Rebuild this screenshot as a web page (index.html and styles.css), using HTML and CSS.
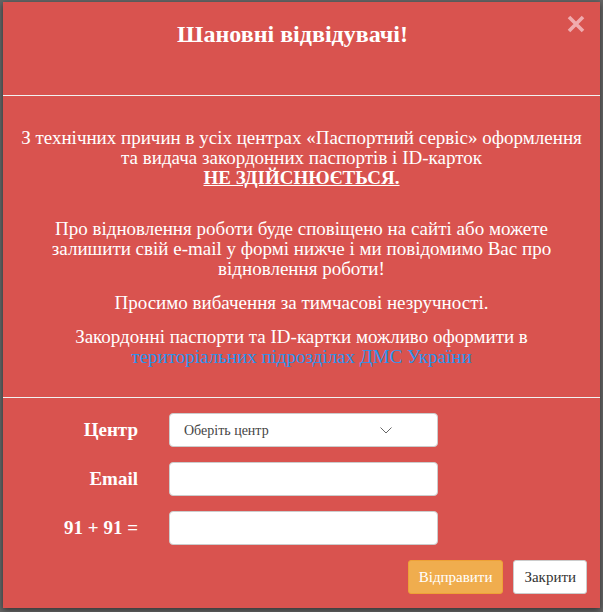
FILE: index.html
```html
<!DOCTYPE html>
<html lang="uk">
<head>
    <meta charset="UTF-8">
    <meta name="viewport" content="width=device-width, initial-scale=1.0">
    <title>Паспортний сервіс</title>
    <link rel="stylesheet" href="styles.css">
</head>
<body>

    <div class="modal">
        <div class="modal-header">
            <h4 class="modal-title">Шановні відвідувачі!</h4>
            <button class="close" type="button" aria-label="Закрити">
                <svg width="18" height="18" viewBox="0 0 18 18">
                    <path d="M2 2 L16 16 M16 2 L2 16" stroke="currentColor" stroke-width="3.6" fill="none"/>
                </svg>
            </button>
        </div>

        <div class="modal-body">
            <p class="first">З технічних причин в усіх центрах «Паспортний сервіс» оформлення та видача закордонних паспортів і ID-карток<br>
                <b><u>НЕ ЗДІЙСНЮЄТЬСЯ.</u></b></p>
            <p>Про відновлення роботи буде сповіщено на сайті або можете залишити свій e-mail у формі нижче і ми повідомимо Вас про відновлення роботи!</p>
            <p>Просимо вибачення за тимчасові незручності.</p>
            <p>Закордонні паспорти та ID-картки можливо оформити в<br>
                <a href="#">територіальних підрозділах ДМС України</a></p>
        </div>

        <form class="modal-footer">
            <div class="form-row">
                <label for="center">Центр</label>
                <div class="select-wrap">
                    <select id="center">
                        <option>Оберіть центр</option>
                    </select>
                    <svg class="chevron" width="12" height="7" viewBox="0 0 12 7">
                        <path d="M0.5 0.5 L6 6 L11.5 0.5" stroke="#666" stroke-width="1" fill="none"/>
                    </svg>
                </div>
            </div>
            <div class="form-row">
                <label for="email">Email</label>
                <input type="text" id="email">
            </div>
            <div class="form-row">
                <label for="captcha">91 + 91 =</label>
                <input type="text" id="captcha">
            </div>
            <div class="buttons">
                <button type="button" class="btn btn-warning">Відправити</button>
                <button type="button" class="btn btn-default">Закрити</button>
            </div>
        </form>
    </div>

</body>
</html>
```

FILE: styles.css
```css
body {
    margin: 0;
    padding: 2px 3px 4px;
    background-color: #656565;
    font-family: "Liberation Serif", "Times New Roman", serif;
}

.modal {
    width: 597px;
    background-color: #d9534f;
    color: white;
    box-shadow: 0 2px 6px rgba(0, 0, 0, 0.5);
}

.modal-header {
    display: flex;
    height: 94px;
    padding: 0 15px;
    box-sizing: border-box;
    border-bottom: 1px solid #f2f2f2;
}

.modal-title {
    flex: 1;
    margin: 18px 0 0;
    font-size: 24px;
    line-height: 28px;
    text-align: center;
}

.close {
    align-self: flex-start;
    margin-top: 13px;
    padding: 0;
    border: none;
    background: none;
    color: rgba(255, 230, 238, 0.6);
    cursor: pointer;
}

.close svg {
    display: block;
}

.modal-body {
    padding: 32px 15px 30px;
    border-bottom: 1px solid #f2f2f2;
    text-align: center;
    font-size: 19px;
    line-height: 20px;
}

.modal-body p {
    margin: 0 0 14px;
}

.modal-body p.first {
    margin-bottom: 31px;
}

.modal-body p:last-child {
    margin-bottom: 0;
}

.modal-body a {
    color: #2a93ee;
    text-decoration: none;
}

.modal-footer {
    padding: 15px 13px 14px 15px;
}

.form-row {
    display: flex;
    align-items: center;
    margin-bottom: 15px;
}

.form-row label {
    width: 120px;
    margin-right: 31px;
    text-align: right;
    font-size: 19px;
    line-height: 20px;
    font-weight: bold;
}

.form-row input,
.form-row select {
    width: 269px;
    height: 34px;
    box-sizing: border-box;
    border: 1px solid #ccc;
    border-radius: 4px;
    background-color: white;
    font-family: inherit;
    font-size: 14px;
}

.form-row select {
    appearance: none;
    padding: 0 14px;
    color: #444;
}

.select-wrap {
    position: relative;
}

.chevron {
    position: absolute;
    right: 46px;
    top: 14px;
}

.buttons {
    display: flex;
    justify-content: flex-end;
    gap: 10px;
}

.btn {
    height: 34px;
    padding: 0 10px;
    border: 1px solid #ccc;
    border-radius: 3px;
    font-family: inherit;
    font-size: 15px;
    cursor: pointer;
}

.btn-warning {
    background-color: #f0ad4e;
    border-color: #eea236;
    color: white;
}

.btn-default {
    background-color: white;
    color: #333;
}
```
